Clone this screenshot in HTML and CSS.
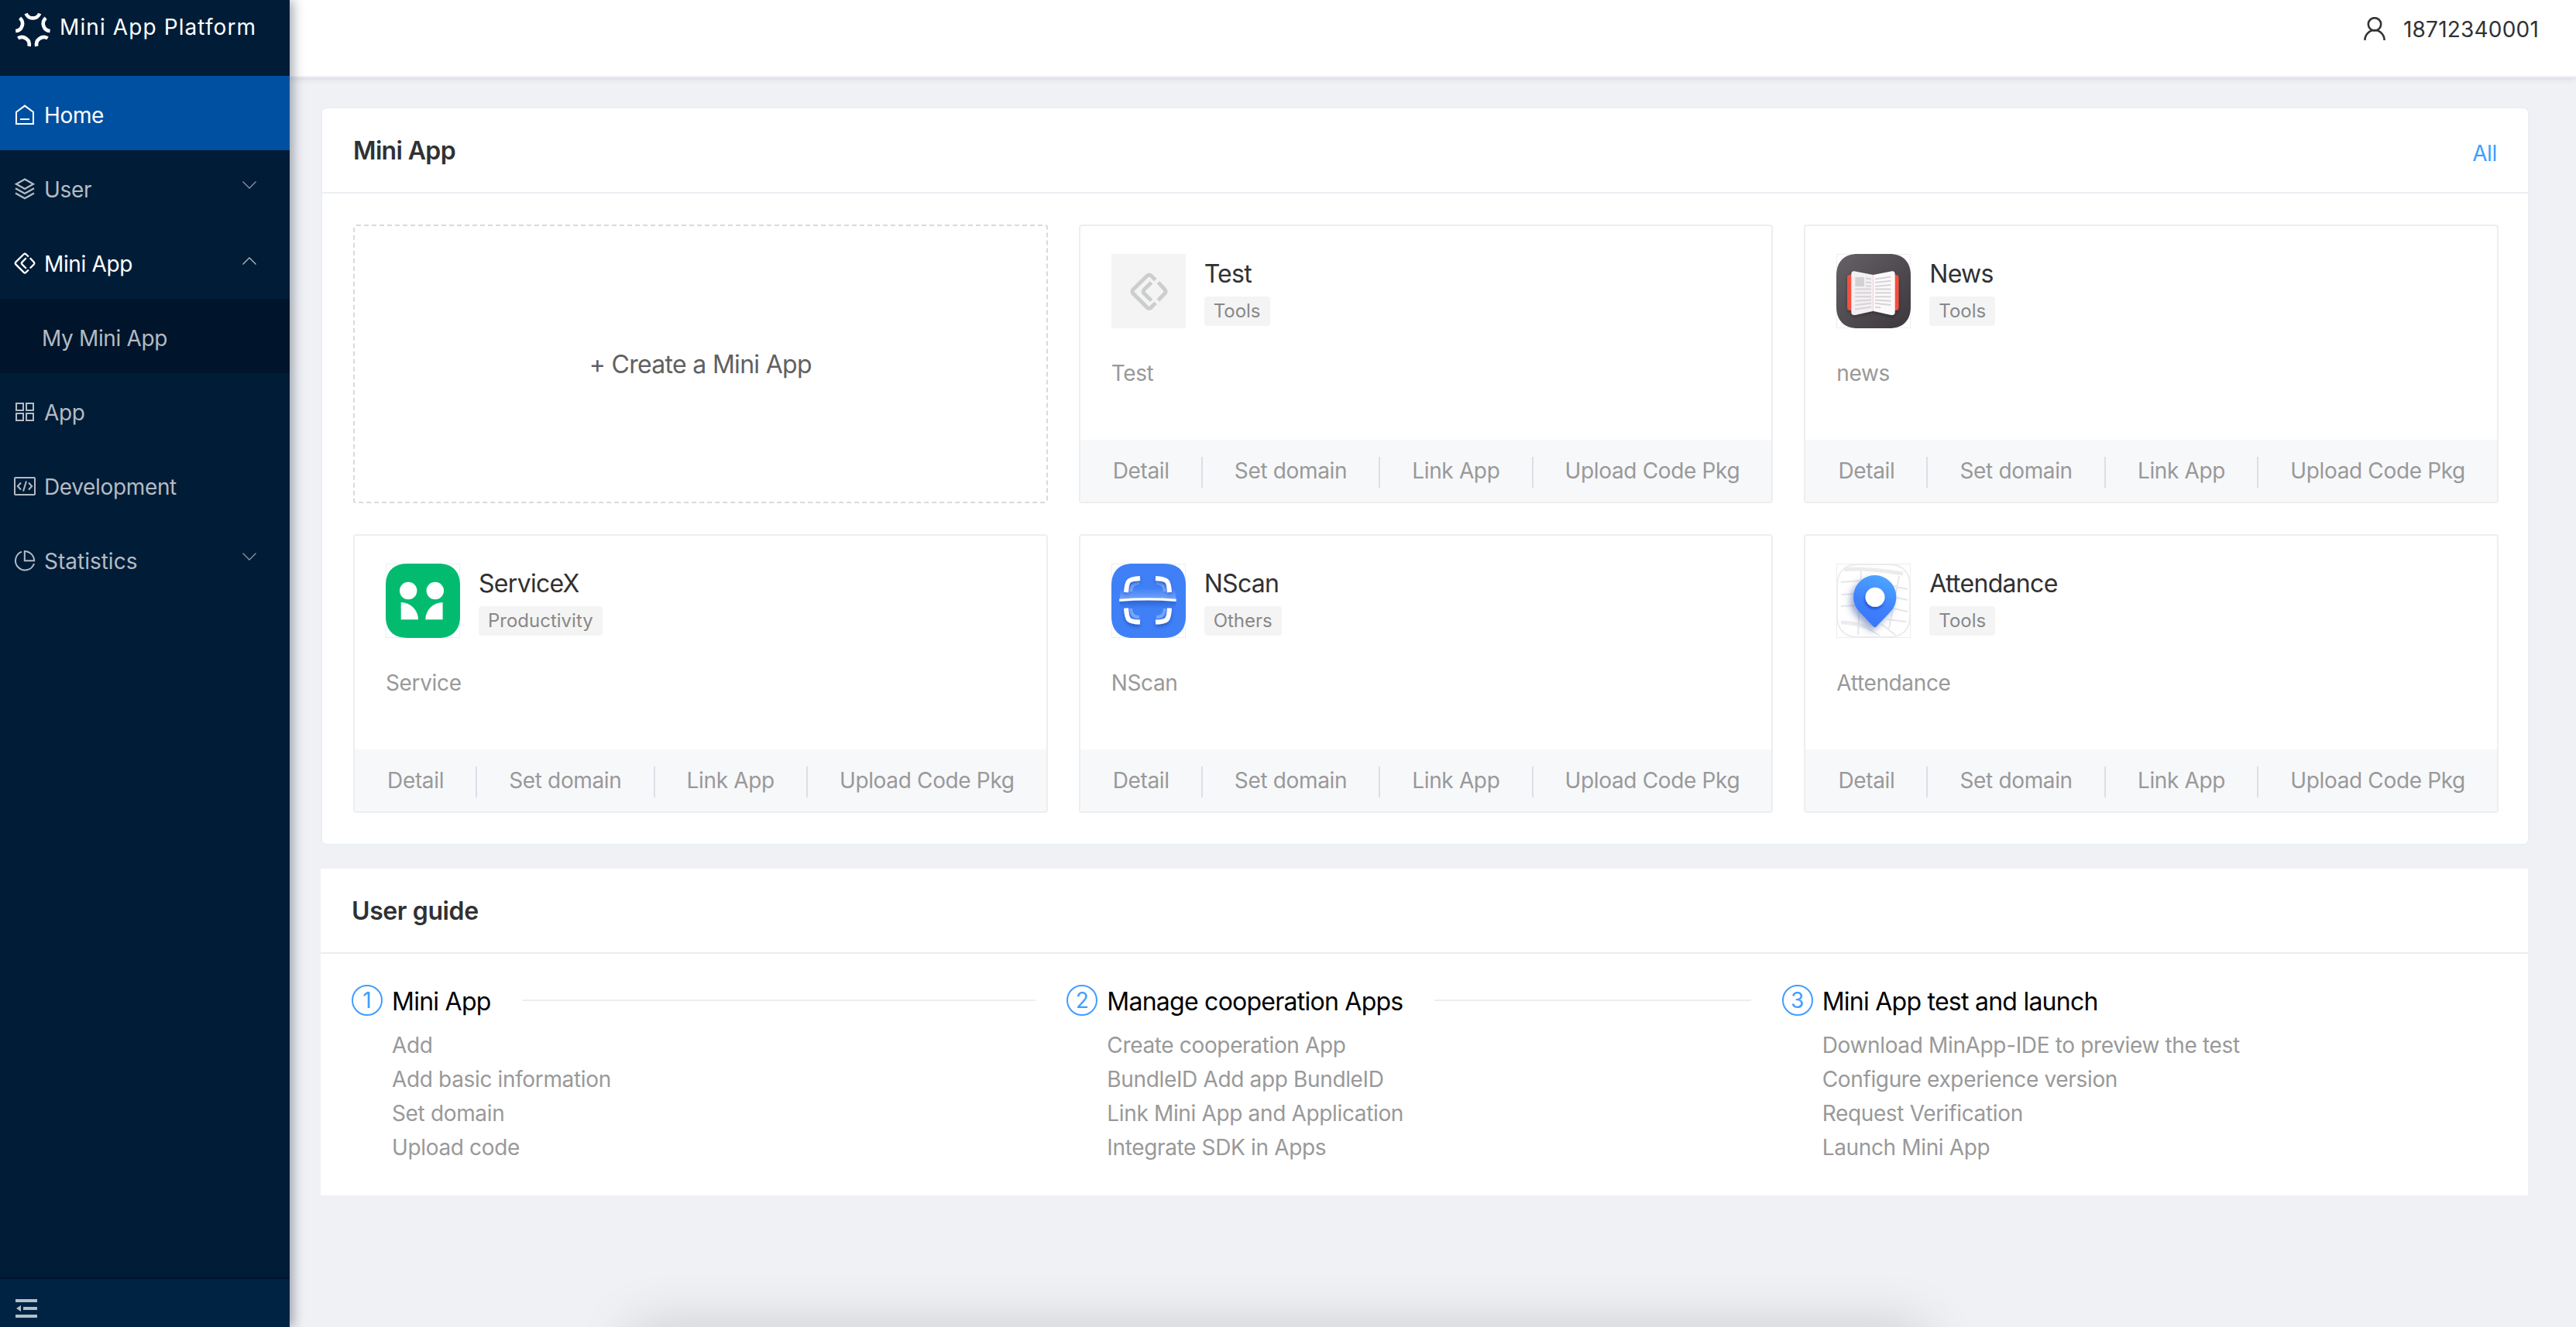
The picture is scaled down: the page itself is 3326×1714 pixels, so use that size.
FILE: index.html
```
<!DOCTYPE html>
<html lang="en">
<head>
    <meta charset="UTF-8">
    <meta name="viewport" content="width=device-width, initial-scale=1.0">
    <title>Mini App Platform</title>
    <link rel="stylesheet" href="styles.css">
</head>
<body>
    <svg class="defs" width="0" height="0">
        <symbol id="i-miniapp" viewBox="0 0 147 147">
            <path fill="none" stroke="currentColor" d="M99 29L81 12Q74 6 67 12L12 66Q6 74 12 81L67 136Q74 142 81 136L99 118M109 38L135 66Q141 73 135 81L109 108M83 38L55 66Q48 73 55 81L83 109"/>
        </symbol>
        <symbol id="i-arrow" viewBox="0 0 18 10">
            <path fill="none" stroke="currentColor" stroke-width="1.3" d="M.5 .5L9 9 17.5 .5"/>
        </symbol>
    </svg>

    <div class="layout">
        <aside class="sidebar">
            <div class="logo">
                <svg class="logo-icon" viewBox="0 0 46 46">
                    <g transform="translate(23.4 23)" fill="none" stroke="#fff" stroke-width="4.6">
                        <path d="M-8.8 -20.5A9.5 9.5 0 0 0 8.8 -20.5"/>
                        <path transform="rotate(72)" d="M-8.8 -20.5A9.5 9.5 0 0 0 8.8 -20.5"/>
                        <path transform="rotate(144)" d="M-8.8 -20.5A9.5 9.5 0 0 0 8.8 -20.5"/>
                        <path transform="rotate(216)" d="M-8.8 -20.5A9.5 9.5 0 0 0 8.8 -20.5"/>
                        <path transform="rotate(288)" d="M-8.8 -20.5A9.5 9.5 0 0 0 8.8 -20.5"/>
                    </g>
                </svg>
                <span class="logo-text">Mini App Platform</span>
            </div>
            <nav class="menu">
                <a class="menu-item active">
                    <svg class="menu-icon" viewBox="0 0 28 28"><path d="M3 26V10.8L14 2.6 25 10.8V26ZM8 20H20"/></svg>
                    <span>Home</span>
                </a>
                <a class="menu-item">
                    <svg class="menu-icon" viewBox="0 0 28 28"><path stroke-width="2.3" d="M14 1.5L25 7.8 14 14 3 7.8ZM2 13.2L14 20 26 13.2M2 19.5L14 26.3 26 19.5"/></svg>
                    <span>User</span>
                    <svg class="arrow"><use href="#i-arrow"/></svg>
                </a>
                <a class="menu-item open">
                    <svg class="menu-icon mini"><use href="#i-miniapp"/></svg>
                    <span>Mini App</span>
                    <svg class="arrow up"><use href="#i-arrow"/></svg>
                </a>
                <a class="menu-item sub"><span>My Mini App</span></a>
                <a class="menu-item">
                    <svg class="menu-icon" viewBox="0 0 28 28"><path d="M3 3H12V12H3ZM16 3H25V12H16ZM3 16H12V25H3ZM16 16H25V25H16Z"/></svg>
                    <span>App</span>
                </a>
                <a class="menu-item">
                    <svg class="menu-icon" viewBox="0 0 28 28"><rect x="1" y="3" width="26" height="22" rx="1"/><path d="M9 9.5L4.8 14 9 18.5M19 9.5L23.2 14 19 18.5M16 7.5L12 20.5"/></svg>
                    <span>Development</span>
                </a>
                <a class="menu-item wide">
                    <svg class="menu-icon" viewBox="0 0 28 28"><path d="M10 2.6A12.3 12.3 0 1 0 26 18M13.8 2V14.3H26.2A12.6 12.6 0 0 0 13.8 2Z"/></svg>
                    <span>Statistics</span>
                    <svg class="arrow"><use href="#i-arrow"/></svg>
                </a>
            </nav>
            <div class="collapse">
                <svg width="28" height="24" viewBox="0 0 28 24"><path fill="#b5bec7" d="M0 0H28V4H0ZM10 10H28V14H10ZM0 20H28V24H0ZM1 12L7 8V16Z"/></svg>
            </div>
        </aside>

        <div class="main">
            <header class="topbar">
                <svg class="user-icon" viewBox="0 0 28 30"><circle cx="14" cy="9.3" r="8.2"/><path d="M1.4 30A12.6 13 0 0 1 26.6 30"/></svg>
                <span>18712340001</span>
            </header>

            <div class="content">
                <section class="panel apps-panel">
                    <div class="panel-header">
                        <h2>Mini App</h2>
                        <a class="all">All</a>
                    </div>
                    <div class="app-grid">
                        <div class="create-card">+ Create a Mini App</div>

                        <div class="app-card">
                            <div class="app-body">
                                <div class="app-info">
                                    <div class="app-icon placeholder"><svg><use href="#i-miniapp"/></svg></div>
                                    <div>
                                        <h3>Test</h3>
                                        <span class="tag">Tools</span>
                                    </div>
                                </div>
                                <p>Test</p>
                            </div>
                            <div class="app-actions"><a>Detail</a><i></i><a>Set domain</a><i></i><a>Link App</a><i></i><a>Upload Code Pkg</a></div>
                        </div>

                        <div class="app-card">
                            <div class="app-body">
                                <div class="app-info">
                                    <div class="app-icon">
                                        <svg viewBox="0 0 96 96">
                                            <defs>
                                                <linearGradient id="g-news" x1="0" y1="0" x2="1" y2="1"><stop offset="0" stop-color="#656166"/><stop offset="1" stop-color="#3d373c"/></linearGradient>
                                                <filter id="f-news" x="-20%" y="-20%" width="140%" height="140%"><feDropShadow dx="0" dy="2" stdDeviation="2" flood-opacity=".3"/></filter>
                                            </defs>
                                            <path fill="url(#g-news)" d="M28 0H68C86 0 96 10 96 28V68C96 86 86 96 68 96H28C10 96 0 86 0 68V28C0 10 10 0 28 0Z"/>
                                            <g filter="url(#f-news)">
                                                <rect x="14" y="27" width="66.5" height="46" rx="4" fill="#f8503c"/>
                                                <path fill="#f4eff3" d="M23 22.2L47.5 27V73.8L24 79Q19.5 79.5 19.3 75V26Q19.5 21.8 23 22.2Z"/>
                                                <path fill="#fcf9fb" d="M72 22.2L47.5 27V73.8L71 79Q75.6 79.5 75.7 75V26Q75.5 21.8 72 22.2Z"/>
                                            </g>
                                            <rect x="24.3" y="30" width="11.7" height="12" fill="#d3d2d3"/>
                                            <path fill="none" stroke="#d5d4d6" stroke-width="2" d="M38 31.5L45 32.5M38 36.5L45 37M38 41.5H45M24.3 45.5H45M24.3 50.3H45M24.3 55.3H45M24.3 60.8L45 59.5M24.3 66L45 63.8M24.3 71.5L45 68.5M50 32.5L70.5 29.5M50 37L70.5 34.8M50 41.8L70.5 40M50 45.5H70.5M50 50.3H70.5M50 55.3H70.5M50 59.5L70.5 60.8M50 63.8L70.5 66M50 68.5L57 69.5"/>
                                        </svg>
                                    </div>
                                    <div>
                                        <h3>News</h3>
                                        <span class="tag">Tools</span>
                                    </div>
                                </div>
                                <p>news</p>
                            </div>
                            <div class="app-actions"><a>Detail</a><i></i><a>Set domain</a><i></i><a>Link App</a><i></i><a>Upload Code Pkg</a></div>
                        </div>

                        <div class="app-card">
                            <div class="app-body">
                                <div class="app-info">
                                    <div class="app-icon">
                                        <svg viewBox="0 0 96 96">
                                            <path fill="#03bb6f" d="M28 0H68C86 0 96 10 96 28V68C96 86 86 96 68 96H28C10 96 0 86 0 68V28C0 10 10 0 28 0Z"/>
                                            <g fill="#fff">
                                                <circle cx="29.2" cy="35" r="11.2"/>
                                                <circle cx="63.8" cy="35" r="11.2"/>
                                                <path d="M19.7 50A22.3 22.3 0 0 1 42 72.3H19.7ZM73.6 50A22.3 22.3 0 0 0 51.3 72.3H73.6Z"/>
                                            </g>
                                        </svg>
                                    </div>
                                    <div>
                                        <h3>ServiceX</h3>
                                        <span class="tag">Productivity</span>
                                    </div>
                                </div>
                                <p>Service</p>
                            </div>
                            <div class="app-actions"><a>Detail</a><i></i><a>Set domain</a><i></i><a>Link App</a><i></i><a>Upload Code Pkg</a></div>
                        </div>

                        <div class="app-card">
                            <div class="app-body">
                                <div class="app-info">
                                    <div class="app-icon">
                                        <svg viewBox="0 0 96 96">
                                            <defs>
                                                <linearGradient id="g-beam" x1="0" y1="0" x2="0" y2="1"><stop offset="0" stop-color="#fff" stop-opacity="0"/><stop offset="1" stop-color="#fff" stop-opacity=".28"/></linearGradient>
                                                <linearGradient id="g-shade" x1="0" y1="0" x2="0" y2="1"><stop offset="0" stop-color="#1c4fb5" stop-opacity=".6"/><stop offset="1" stop-color="#1c4fb5" stop-opacity="0"/></linearGradient>
                                                <filter id="f-scan" x="-20%" y="-20%" width="140%" height="150%"><feDropShadow dx="0" dy="3" stdDeviation="2" flood-color="#1c4fb5" flood-opacity=".7"/></filter>
                                            </defs>
                                            <path fill="#4080f7" d="M28 0H68C86 0 96 10 96 28V68C96 86 86 96 68 96H28C10 96 0 86 0 68V28C0 10 10 0 28 0Z"/>
                                            <path fill="none" stroke="#79a5f9" stroke-width="4" d="M25 36Q25 25 36 25M69 36Q69 25 58 25M25 58Q25 69 36 69M69 58Q69 69 58 69"/>
                                            <path fill="none" stroke="#fff" stroke-width="6" filter="url(#f-scan)" d="M19 37C20 22 21 20 37 19M75 37C74 22 73 20 57 19M19 57.5C20 73 21 75 37 75.5M75 57.5C74 73 73 75 57 75.5"/>
                                            <path fill="url(#g-beam)" d="M12 32H82L83.5 46Q47 43 10.5 46Z"/>
                                            <path fill="url(#g-shade)" d="M10.5 48Q47 45 83.5 48L82 58H12Z"/>
                                            <path fill="none" stroke="#fff" stroke-width="3.2" d="M10.2 47.3Q47 44.5 83.6 47.3"/>
                                        </svg>
                                    </div>
                                    <div>
                                        <h3>NScan</h3>
                                        <span class="tag">Others</span>
                                    </div>
                                </div>
                                <p>NScan</p>
                            </div>
                            <div class="app-actions"><a>Detail</a><i></i><a>Set domain</a><i></i><a>Link App</a><i></i><a>Upload Code Pkg</a></div>
                        </div>

                        <div class="app-card">
                            <div class="app-body">
                                <div class="app-info">
                                    <div class="app-icon">
                                        <svg viewBox="0 0 96 96">
                                            <defs>
                                                <linearGradient id="g-pin" x1=".7" y1="0" x2=".4" y2="1"><stop offset="0" stop-color="#4da6ff"/><stop offset=".6" stop-color="#3f80fd"/><stop offset="1" stop-color="#3877f8"/></linearGradient>
                                                <filter id="f-pin" x="-30%" y="-20%" width="160%" height="150%"><feDropShadow dx="-4" dy="5" stdDeviation="4" flood-color="#30509a" flood-opacity=".5"/></filter>
                                                <filter id="f-dot" x="-30%" y="-30%" width="160%" height="170%"><feDropShadow dx="-1" dy="3" stdDeviation="1.5" flood-color="#1846c0" flood-opacity=".7"/></filter>
                                            </defs>
                                            <path fill="#fff" stroke="#ebebeb" stroke-width="1.8" d="M28 1H68C85 1 95 11 95 28V68C95 85 85 95 68 95H28C11 95 1 85 1 68V28C1 11 11 1 28 1Z"/>
                                            <path fill="none" stroke="#ececee" stroke-width="5" d="M10 7.5Q40 5 86 13M6 76Q24 76 38 82"/>
                                            <path fill="none" stroke="#e6e6ea" stroke-width="1.8" d="M32 10L28 92M81 16L68 84M6 24L30 22M6 40L24 39M6 55L28 54M74 29L92 33M78 44L92 47M74 58L92 62M66 72L90 75M38 82L56 93M58 78L76 92"/>
                                            <path fill="url(#g-pin)" filter="url(#f-pin)" d="M49.8 15A28 28 0 0 1 70 62L51.5 81.5Q49.8 83 48 81.5L30 62.5A28 28 0 0 1 49.8 15Z"/>
                                            <circle cx="50" cy="43.3" r="12.5" fill="#fff" filter="url(#f-dot)"/>
                                        </svg>
                                    </div>
                                    <div>
                                        <h3>Attendance</h3>
                                        <span class="tag">Tools</span>
                                    </div>
                                </div>
                                <p>Attendance</p>
                            </div>
                            <div class="app-actions"><a>Detail</a><i></i><a>Set domain</a><i></i><a>Link App</a><i></i><a>Upload Code Pkg</a></div>
                        </div>
                    </div>
                </section>

                <section class="panel guide-panel">
                    <div class="panel-header">
                        <h2>User guide</h2>
                    </div>
                    <div class="steps">
                        <div class="step">
                            <div class="step-head"><span class="num">1</span><h3>Mini App</h3></div>
                            <ul>
                                <li>Add</li>
                                <li>Add basic information</li>
                                <li>Set domain</li>
                                <li>Upload code</li>
                            </ul>
                        </div>
                        <div class="step">
                            <div class="step-head"><span class="num">2</span><h3>Manage cooperation Apps</h3></div>
                            <ul>
                                <li>Create cooperation App</li>
                                <li>BundleID Add app BundleID</li>
                                <li>Link Mini App and Application</li>
                                <li>Integrate SDK in Apps</li>
                            </ul>
                        </div>
                        <div class="step">
                            <div class="step-head"><span class="num">3</span><h3>Mini App test and launch</h3></div>
                            <ul>
                                <li>Download MinApp-IDE to preview the test</li>
                                <li>Configure experience version</li>
                                <li>Request Verification</li>
                                <li>Launch Mini App</li>
                            </ul>
                        </div>
                    </div>
                </section>
            </div>
        </div>
    </div>
    <div class="bottom-shadow"></div>
</body>
</html>
```
FILE: styles.css
```
* { box-sizing: border-box; }
html, body { height: 100%; overflow: hidden; }
body { margin: 0; font-family: Inter, "Liberation Sans", sans-serif; font-size: 28px; letter-spacing: -0.35px; background: #f0f1f5; color: #303133; }
h2, h3, p, ul { margin: 0; padding: 0; }
.defs { position: absolute; }
.layout { display: flex; height: 100%; }

/* sidebar */
.sidebar { width: 374px; flex: none; display: flex; flex-direction: column; background: #001c37; box-shadow: 4px 0 14px rgba(0, 21, 41, 0.38); z-index: 2; }
.logo { height: 98px; flex: none; display: flex; align-items: flex-start; padding: 15px 0 0 19px; }
.logo-icon { width: 46px; height: 46px; overflow: hidden; }
.logo-text { margin-left: 12px; line-height: 40px; color: #fff; letter-spacing: 1.1px; }
.menu { flex: 1; }
.menu-item { display: flex; align-items: center; height: 96px; padding: 4px 43px 0 18px; color: #b3bbc3; }
.menu-item span { padding-top: 2px; flex: 1; }
.menu-item.active { background: #0050a2; color: #fff; }
.menu-item.open { color: #fff; }
.menu-item.wide { letter-spacing: 0; }
.menu-item.sub { background: #00152b; padding-left: 54px; }
.menu-icon { width: 28px; height: 28px; margin-right: 11px; fill: none; stroke: currentColor; stroke-width: 2; }
.menu-icon.mini { stroke-width: 12; }
.arrow { width: 18px; height: 10px; margin-bottom: 10px; color: #8a96a3; }
.arrow.up { transform: rotate(180deg); color: #b3bbc3; margin-bottom: 6px; }
.collapse { height: 64px; flex: none; border-top: 2px solid #00152b; background: #002344; padding: 26px 0 0 20px; }
.collapse svg { display: block; }

/* main */
.main { flex: 1; display: flex; flex-direction: column; }
.topbar { height: 100px; flex: none; display: flex; justify-content: flex-end; align-items: flex-start; padding: 22px 48px 0 0; background: #fff; border-bottom: 2px solid #f0f1f5; box-shadow: 0 2px 8px rgba(0, 21, 41, 0.1); color: #333; letter-spacing: 0.2px; line-height: 32px; }
.user-icon { width: 28px; height: 30px; margin-right: 23px; fill: none; stroke: #333; stroke-width: 2.6; }
.content { padding: 38px 60px 0 40px; }
.panel { background: #fff; }
.apps-panel { border: 2px solid #ebeef5; border-radius: 8px; }
.guide-panel { margin-top: 30px; margin-right: 2px; }
.panel-header { height: 110px; display: flex; justify-content: space-between; align-items: center; padding: 0 40px; border-bottom: 2px solid #ebeef3; }
.guide-panel .panel-header { border-bottom-color: #ededed; }
h2 { font-size: 32px; font-weight: 600; letter-spacing: -0.02em; }
.guide-panel h2 { letter-spacing: -0.4px; }
.all { color: #409eff; padding-top: 8px; }

/* mini app cards */
.app-grid { display: grid; grid-template-columns: repeat(3, 1fr); gap: 40px; padding: 40px 38px 40px 40px; }
.create-card { height: 360px; display: flex; align-items: center; justify-content: center; border: 2px dashed #d9d9d9; border-radius: 4px; font-size: 32px; letter-spacing: -0.7px; color: #606060; }
.app-card { height: 360px; border: 2px solid #eee; border-radius: 4px; display: flex; flex-direction: column; }
.app-body { flex: 1; padding: 36px 40px 0; }
.app-info { display: flex; gap: 24px; }
.app-icon { width: 96px; height: 96px; border: 1px solid #eee; }
.app-icon svg { display: block; width: 96px; height: 96px; margin: -1px; }
.app-icon.placeholder { border: none; background: #f4f4f4; display: flex; align-items: center; justify-content: center; }
.app-icon.placeholder svg { width: 49px; height: 49px; margin: 0 0 0 1px; color: #cccecd; stroke-width: 15; }
.app-info h3 { font-size: 32px; font-weight: 400; letter-spacing: -0.7px; line-height: 51px; margin-bottom: 4px; }
.tag { display: block; width: fit-content; height: 38px; line-height: 38px; padding: 0 12px; border-radius: 4px; background: #f4f4f4; color: #888; font-size: 24px; letter-spacing: 0; }
.app-body p { margin-top: 38px; line-height: 40px; color: #999; }
.app-actions { display: flex; align-items: center; height: 80px; padding-left: 1px; background: #f7f8fa; color: #999; }
.app-actions a { flex: 1 1 auto; text-align: center; line-height: 40px; }
.app-actions i { width: 2px; height: 40px; margin-top: 4px; background: #dcdfe6; }

/* user guide */
.steps { display: flex; padding: 40px; }
.step { flex: 1 1 0; min-width: 0; }
.step-head { display: flex; align-items: center; height: 40px; }
.step-head h3 { margin-left: 12px; font-size: 32px; font-weight: 400; letter-spacing: -0.75px; color: #000; padding-top: 2px; }
.num { width: 40px; height: 40px; border: 2px solid #409eff; border-radius: 50%; color: #409eff; text-align: center; line-height: 37px; letter-spacing: 0; }
.step:not(:last-child) .step-head::after { content: ""; flex: 1; height: 2px; margin: 0 40px; background: #ebeef0; }
.step ul { margin: 16px 0 0 52px; list-style: none; color: #999; line-height: 44px; }

.bottom-shadow { position: fixed; left: 810px; bottom: -60px; width: 1680px; height: 60px; border-radius: 40px; box-shadow: 0 0 70px rgba(0, 0, 0, 0.17); }
```
